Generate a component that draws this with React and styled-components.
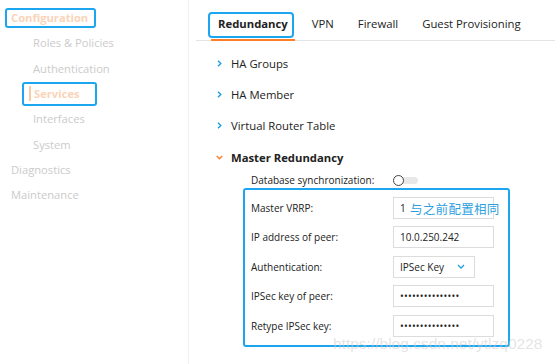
import styled, { createGlobalStyle } from "styled-components";

const Global = createGlobalStyle`
  body {
    margin: 0;
    background: #fff;
    font-family: "Open Sans", "Noto Sans", sans-serif;
    color: #222;
  }
`;

const BLUE = "#1ba6ef";
const ORANGE = "#ff7e27";

const Page = styled.div`
  position: relative;
  display: flex;
  width: 555px;
  height: 364px;
  overflow: hidden;
`;

const Sidebar = styled.nav`
  width: 189px;
  flex: none;
  padding-top: 5px;
  border-right: 1px solid #f0f0f0;
  box-sizing: border-box;
`;

const NavItem = styled.div`
  height: 25.3px;
  display: flex;
  align-items: center;
  padding-left: ${(p) => (p.sub ? 22 : 5)}px;
  font-size: 11.2px;
  color: #cbcbcb;
`;

const Highlight = styled.span`
  display: inline-flex;
  align-items: center;
  height: ${(p) => p.h || 20}px;
  padding: 0 ${(p) => p.pr || 4}px 0 ${(p) => p.pl || 4}px;
  border: 2px solid ${BLUE};
  border-radius: 3px;
  box-sizing: border-box;
  color: #fbd3b8;
  font-weight: 700;
`;

const SubText = styled.span`
  padding-left: ${(p) => p.pad ?? 11}px;
`;

const ActiveBar = styled.span`
  width: 2px;
  height: 15px;
  background: #fcc9a6;
  margin-right: 3px;
`;

const Main = styled.main`
  flex: 1;
  padding-left: 7px;
`;

const Tabs = styled.div`
  display: flex;
  gap: 10px;
  padding-left: 15px;
  border-bottom: 1px solid #e4e4e4;
`;

const Tab = styled.div`
  position: relative;
  padding: 15px 7px 6px;
  line-height: 18px;
  font-size: 11.3px;
  font-weight: ${(p) => (p.active ? 700 : 400)};
  color: #222;
  border-bottom: 2px solid ${(p) => (p.active ? ORANGE : "transparent")};
  margin-bottom: -1px;
  ${(p) =>
    p.active &&
    `
    &::before {
      content: "";
      position: absolute;
      left: -3px;
      right: 1px;
      top: 12px;
      bottom: 1px;
      border: 2px solid ${BLUE};
      border-radius: 4px;
    }
  `}
`;

const Accordion = styled.div`
  padding: 6.5px 0 0 20px;
`;

const Header = styled.div`
  height: 31.3px;
  display: flex;
  align-items: center;
  gap: 8px;
  font-size: 11.3px;
  font-weight: ${(p) => (p.open ? 700 : 400)};
`;

const Body = styled.div`
  padding-left: 27px;
`;

const SyncRow = styled.div`
  display: flex;
  align-items: center;
  height: 15px;
  padding-left: 8px;
`;

const Label = styled.div`
  width: ${(p) => p.w}px;
  flex: none;
  font-size: 10px;
`;

const Toggle = styled.div`
  position: relative;
  width: 25px;
  height: 11px;
  &::before {
    content: "";
    position: absolute;
    left: 3px;
    right: 0;
    top: 2px;
    height: 7px;
    border-radius: 4px;
    background: #e8e8e8;
  }
  &::after {
    content: "";
    position: absolute;
    left: 0;
    top: 0;
    width: 11px;
    height: 11px;
    box-sizing: border-box;
    border: 1.5px solid #444;
    border-radius: 50%;
    background: #fff;
  }
`;

const Frame = styled.div`
  width: 267px;
  height: 159px;
  box-sizing: border-box;
  border: 2px solid ${BLUE};
  border-radius: 3px;
  padding: 7px 0 0 6px;
  display: flex;
  flex-direction: column;
  gap: 7.5px;
`;

const Row = styled.div`
  position: relative;
  display: flex;
  align-items: center;
  height: 22px;
`;

const Field = styled.div`
  width: ${(p) => p.w || 101}px;
  height: 22px;
  box-sizing: border-box;
  border: 1px solid #dcdcdc;
  display: flex;
  align-items: center;
  justify-content: space-between;
  padding: 0 0 0 6px;
  font-size: 10px;
  letter-spacing: ${(p) => (p.dots ? "0.2px" : "0")};
  color: #222;
`;

const Note = styled.span`
  position: absolute;
  left: 159px;
  top: 2px;
  font-family: "Noto Sans CJK SC", sans-serif;
  font-size: 12.5px;
  color: #2c9fe0;
  letter-spacing: 0.3px;
`;

const Watermark = styled.div`
  position: absolute;
  left: 333px;
  top: 335px;
  font-family: "Liberation Sans", Arial, sans-serif;
  font-size: 15.5px;
  color: rgba(205, 205, 205, 0.55);
`;

const Chevron = ({ open }) => (
  <svg width="7" height="7" viewBox="0 0 7 7">
    {open ? (
      <path d="M0.8 2 L3.5 4.8 L6.2 2" fill="none" stroke={ORANGE} strokeWidth="1.4" />
    ) : (
      <path d="M2 0.8 L4.8 3.5 L2 6.2" fill="none" stroke="#1d9ee0" strokeWidth="1.4" />
    )}
  </svg>
);

const SelectArrow = () => (
  <svg width="8" height="5" viewBox="0 0 8 5" style={{ marginRight: 9 }}>
    <path d="M1 1 L4 4 L7 1" fill="none" stroke="#1d9ee0" strokeWidth="1.3" />
  </svg>
);

export default function App() {
  const dots = "•••••••••••••••";
  return (
    <Page>
      <Global />
      <Sidebar>
        <NavItem>
          <Highlight pl={4} pr={6}>Configuration</Highlight>
        </NavItem>
        <NavItem sub><SubText>Roles &amp; Policies</SubText></NavItem>
        <NavItem sub><SubText>Authentication</SubText></NavItem>
        <NavItem sub>
          <Highlight h={24} pl={5} pr={15}>
            <ActiveBar />Services
          </Highlight>
        </NavItem>
        <NavItem sub><SubText>Interfaces</SubText></NavItem>
        <NavItem sub><SubText>System</SubText></NavItem>
        <NavItem>
          <SubText pad={6}>Diagnostics</SubText>
        </NavItem>
        <NavItem>
          <SubText pad={6}>Maintenance</SubText>
        </NavItem>
      </Sidebar>
      <Main>
        <Tabs>
          <Tab active>Redundancy</Tab>
          <Tab>VPN</Tab>
          <Tab>Firewall</Tab>
          <Tab>Guest Provisioning</Tab>
        </Tabs>
        <Accordion>
          <Header><Chevron />HA Groups</Header>
          <Header><Chevron />HA Member</Header>
          <Header><Chevron />Virtual Router Table</Header>
          <Header open><Chevron open />Master Redundancy</Header>
          <Body>
            <SyncRow>
              <Label w={142}>Database synchronization:</Label>
              <Toggle />
            </SyncRow>
            <Frame>
              <Row>
                <Label w={142}>Master VRRP:</Label>
                <Field>1</Field>
                <Note>与之前配置相同</Note>
              </Row>
              <Row>
                <Label w={142}>IP address of peer:</Label>
                <Field>10.0.250.242</Field>
              </Row>
              <Row>
                <Label w={142}>Authentication:</Label>
                <Field w={82}>IPSec Key<SelectArrow /></Field>
              </Row>
              <Row>
                <Label w={142}>IPSec key of peer:</Label>
                <Field dots>{dots}</Field>
              </Row>
              <Row>
                <Label w={142}>Retype IPSec key:</Label>
                <Field dots>{dots}</Field>
              </Row>
            </Frame>
          </Body>
        </Accordion>
      </Main>
      <Watermark>https://blog.csdn.net/ytlzq0228</Watermark>
    </Page>
  );
}
